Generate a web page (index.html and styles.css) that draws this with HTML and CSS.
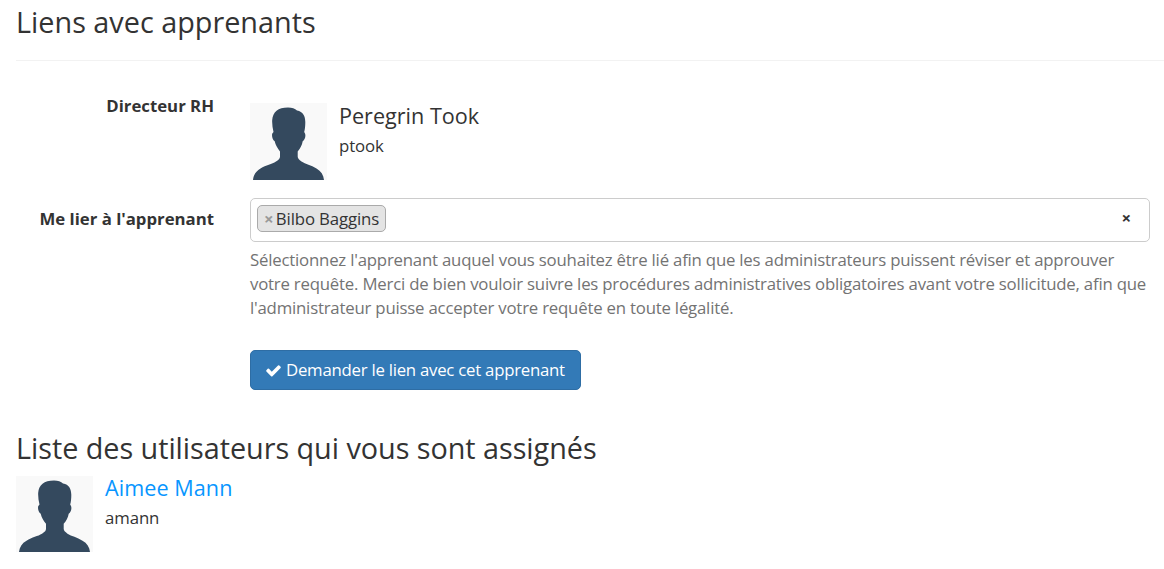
FILE: index.html
```html
<!DOCTYPE html>
<html lang="fr">
<head>
<meta charset="utf-8">
<title>Liens avec apprenants</title>
<link rel="stylesheet" href="styles.css">
</head>
<body>
<svg class="defs" width="0" height="0"><symbol id="avatar" viewBox="0 0 77 77" preserveAspectRatio="none"><path fill="#34495e" d="M3 77C3.500 72 6 68 10.500 65.500C16 62 22 61 26 58.500C29 56.500 30 55.500 30 53.500V48.500C27.500 45 25.500 42 24.700 38.200C22.500 37 21.500 32.500 22.300 30.500L23.500 29C22.500 25 22 21 22.200 17C22.800 9 28 4.500 38 4.500C42 4.500 45 5.500 47 7.500C53 8.500 55.300 13 55.300 19C55.300 23 55 26 54.200 29L55 30.500C56 32.500 55 37 52.700 38.200C52 42 50.500 45 47.700 48.500V53.500C47.700 55.500 49 56.500 51.500 58.500C55.500 61 61 62 66.500 65.500C71 68 73.500 72 74 77Z"/></symbol></svg>
<main class="page">
<h1 class="legend">Liens avec apprenants</h1>
<form class="form">
<div class="row director">
<span class="label">Directeur RH</span>
<div class="user"><svg class="avatar"><use href="#avatar"/></svg><div class="info"><h2 class="name">Peregrin Took</h2><p class="login">ptook</p></div></div>
</div>
<div class="row">
<span class="label learner">Me lier à l'apprenant</span>
<div class="field">
<div class="select"><span class="tag"><b class="remove">×</b>Bilbo Baggins</span><b class="clear">×</b></div>
<p class="help">Sélectionnez l'apprenant auquel vous souhaitez être lié afin que les administrateurs puissent réviser et approuver<br>votre requête. Merci de bien vouloir suivre les procédures administratives obligatoires avant votre sollicitude, afin que<br>l'administrateur puisse accepter votre requête en toute légalité.</p>
<button class="button" type="button"><svg class="check" viewBox="0 0 1792 1792"><path fill="currentColor" d="M1671 566q0 40-28 68l-724 724-136 136q-28 28-68 28t-68-28l-136-136-362-362q-28-28-28-68t28-68l136-136q28-28 68-28t68 28l294 295 656-657q28-28 68-28t68 28l136 136q28 28 28 68z"/></svg>Demander le lien avec cet apprenant</button>
</div>
</div>
</form>
<h1 class="subtitle">Liste des utilisateurs qui vous sont assignés</h1>
<div class="user assigned"><svg class="avatar"><use href="#avatar"/></svg><div class="info"><h2 class="name link">Aimee Mann</h2><p class="login">amann</p></div></div>
</main>
</body>
</html>
```
FILE: styles.css
```css
* { box-sizing: border-box; }
body { margin: 0; background: #fff; color: #333; font: 16.8px/24px "Open Sans", sans-serif; overflow: hidden; }
.defs { display: none; }
.page { padding-left: 16px; }
h1, h2, p { margin: 0; font-weight: 400; }
.legend { height: 61px; padding-top: 2px; border-bottom: 1px solid #f2f2f2; font-size: 28.8px; line-height: 39px; }
.form { padding-top: 33px; }
.row { display: flex; gap: 36px; }
.label { width: 198px; flex: none; text-align: right; font-weight: 700; letter-spacing: -0.01px; }
.director { height: 104px; }
.director .user { padding-top: 9px; }
.user { display: flex; gap: 12px; }
.avatar { width: 77px; height: 77px; background: #f9f9f9; }
.name { font-size: 21.6px; line-height: 25px; }
.login { padding-top: 6px; letter-spacing: -0.1px; }
.link { color: #0896ff; letter-spacing: 0.06px; }
.assigned .name { line-height: 24px; }
.assigned .avatar { height: 76px; }
.learner { padding-top: 9px; }
.field { width: 900px; }
.select { display: flex; justify-content: space-between; align-items: flex-start; height: 44px; padding: 6px 18px 0 6px; border: 1px solid #ccc; border-radius: 5px; }
.tag { display: flex; align-items: center; height: 27px; padding: 0 6px; background: #e4e4e4; border: 1px solid #aaa; border-radius: 5px; letter-spacing: -0.14px; }
.remove { color: #999; margin-right: 2.4px; }
.clear { line-height: 26px; }
.help { padding-top: 6px; color: #737373; white-space: nowrap; letter-spacing: -0.208px; }
.button { display: flex; align-items: center; justify-content: flex-start; width: 331px; height: 40px; margin-top: 30px; padding: 0 0 0 14px; color: #fff; background: #337ab7; border: 1px solid #2e6da4; border-radius: 5px; font: inherit; letter-spacing: -0.25px; white-space: nowrap; }
.check { flex: none; width: 17px; height: 17px; margin-right: 4px; }
.subtitle { padding-top: 38px; margin-bottom: 8px; font-size: 28.8px; line-height: 40px; letter-spacing: -0.04px; }
```
